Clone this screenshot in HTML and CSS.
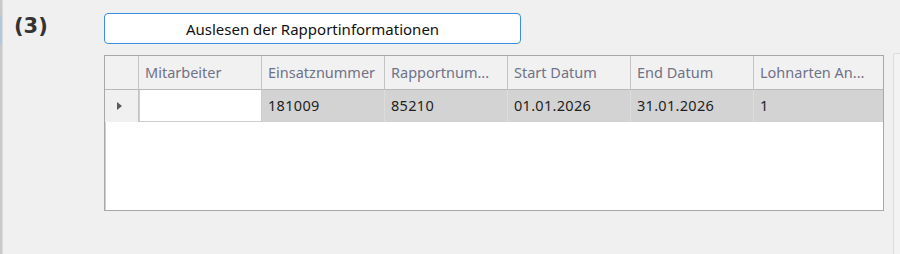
FILE: index.html
```html
<!DOCTYPE html>
<html lang="de">

<head>
    <meta charset="UTF-8">
    <title>Rapportinformationen</title>
    <link rel="stylesheet" href="styles.css">
</head>

<body>
    <div class="page">
        <div class="side-strip"><div class="side-mark"></div></div>

        <div class="step-label">(3)</div>

        <div class="main">
            <button class="read-button">Auslesen der Rapportinformationen</button>

            <div class="data-grid">
                <div class="head corner"></div>
                <div class="head">Mitarbeiter</div>
                <div class="head">Einsatznummer</div>
                <div class="head">Rapportnum...</div>
                <div class="head">Start Datum</div>
                <div class="head">End Datum</div>
                <div class="head">Lohnarten An...</div>

                <div class="row-head"><span class="arrow"></span></div>
                <div class="cell edit"></div>
                <div class="cell">181009</div>
                <div class="cell">85210</div>
                <div class="cell">01.01.2026</div>
                <div class="cell">31.01.2026</div>
                <div class="cell">1</div>
            </div>
        </div>

        <div class="right-panel"></div>
    </div>
</body>

</html>
```

FILE: styles.css
```css
body {
    margin: 0;
    background-color: #f0f0f0;
    font-family: "Noto Sans", "Open Sans", sans-serif;
    color: #1e1e1e;
}

.page {
    display: grid;
    grid-template-columns: 3px 101px 780px 1fr;
    height: 254px;
    overflow: hidden;
}

.side-strip {
    background-color: #c9c9c9;
    border-right: 1px solid #dadada;
    box-sizing: border-box;
    padding-top: 15px;
}

.side-mark {
    height: 30px;
    background-color: #b3c8dc;
}

.step-label {
    padding: 12px 0 0 11px;
    font-family: "DejaVu Sans", sans-serif;
    font-size: 21px;
    font-weight: bold;
    color: #333;
    line-height: 28px;
}

.main {
    padding-top: 13px;
}

.read-button {
    display: block;
    width: 417px;
    height: 31px;
    margin-bottom: 11px;
    padding: 0;
    background-color: #fff;
    border: 1px solid #3b8edc;
    border-radius: 4px;
    font-family: inherit;
    font-size: 15px;
    color: #111;
}

.data-grid {
    display: grid;
    grid-template-columns: 34px 123px 123px 123px 123px 123px 1fr;
    grid-template-rows: 34px 32px;
    align-content: start;
    height: 156px;
    box-sizing: border-box;
    background-color: #fff;
    border: 1px solid #a8a8a8;
    box-shadow: inset 1px 1px 0 #cfcfcf;
}

.head {
    background-color: #f1f1f1;
    border-right: 1px solid #c4c4c4;
    border-bottom: 1px solid #b9b9b9;
    padding: 0 6px;
    line-height: 33px;
    font-size: 14.5px;
    color: #6f7288;
    white-space: nowrap;
    overflow: hidden;
}

.head:nth-child(7) {
    border-right: none;
}

.row-head {
    background-color: #f0f0f0;
    border-right: 1px solid #c4c4c4;
    display: flex;
    align-items: center;
    justify-content: center;
}

.arrow {
    width: 0;
    height: 0;
    margin-left: -4px;
    border-top: 4px solid transparent;
    border-bottom: 4px solid transparent;
    border-left: 5px solid #5a5a5a;
}

.cell {
    background-color: #d3d3d3;
    border-right: 1px solid #dcdcdc;
    padding: 0 6px;
    line-height: 31px;
    font-size: 14.5px;
    letter-spacing: 0.3px;
    color: #1e1e1e;
}

.cell:last-child {
    border-right: none;
}

.cell.edit {
    background-color: #fff;
    border: 1px solid #cdcdcd;
    border-top: none;
}

.right-panel {
    margin: 53px 0 0 9px;
    background-color: #f3f3f3;
    border-left: 1px solid #dcdcdc;
    border-top: 1px solid #dcdcdc;
    border-top-left-radius: 2px;
}
```
